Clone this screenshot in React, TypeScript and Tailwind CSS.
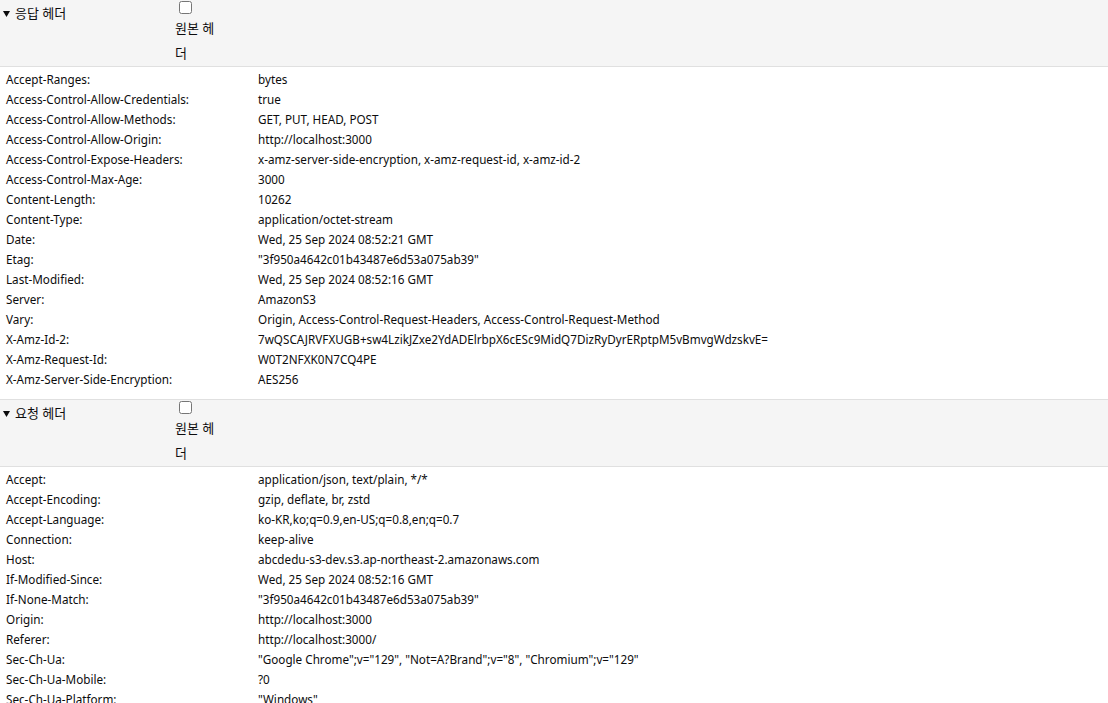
import React from "react";

type Header = [string, string];

const responseHeaders: Header[] = [
  ["Accept-Ranges", "bytes"],
  ["Access-Control-Allow-Credentials", "true"],
  ["Access-Control-Allow-Methods", "GET, PUT, HEAD, POST"],
  ["Access-Control-Allow-Origin", "http://localhost:3000"],
  ["Access-Control-Expose-Headers", "x-amz-server-side-encryption, x-amz-request-id, x-amz-id-2"],
  ["Access-Control-Max-Age", "3000"],
  ["Content-Length", "10262"],
  ["Content-Type", "application/octet-stream"],
  ["Date", "Wed, 25 Sep 2024 08:52:21 GMT"],
  ["Etag", "\"3f950a4642c01b43487e6d53a075ab39\""],
  ["Last-Modified", "Wed, 25 Sep 2024 08:52:16 GMT"],
  ["Server", "AmazonS3"],
  ["Vary", "Origin, Access-Control-Request-Headers, Access-Control-Request-Method"],
  ["X-Amz-Id-2", "7wQSCAJRVFXUGB+sw4LzikJZxe2YdADElrbpX6cESc9MidQ7DizRyDyrERptpM5vBmvgWdzskvE="],
  ["X-Amz-Request-Id", "W0T2NFXK0N7CQ4PE"],
  ["X-Amz-Server-Side-Encryption", "AES256"],
];

const requestHeaders: Header[] = [
  ["Accept", "application/json, text/plain, */*"],
  ["Accept-Encoding", "gzip, deflate, br, zstd"],
  ["Accept-Language", "ko-KR,ko;q=0.9,en-US;q=0.8,en;q=0.7"],
  ["Connection", "keep-alive"],
  ["Host", "abcdedu-s3-dev.s3.ap-northeast-2.amazonaws.com"],
  ["If-Modified-Since", "Wed, 25 Sep 2024 08:52:16 GMT"],
  ["If-None-Match", "\"3f950a4642c01b43487e6d53a075ab39\""],
  ["Origin", "http://localhost:3000"],
  ["Referer", "http://localhost:3000/"],
  ["Sec-Ch-Ua", "\"Google Chrome\";v=\"129\", \"Not=A?Brand\";v=\"8\", \"Chromium\";v=\"129\""],
  ["Sec-Ch-Ua-Mobile", "?0"],
  ["Sec-Ch-Ua-Platform", "\"Windows\""],
];

const SectionHeader = ({ title, top }: { title: string; top?: boolean }) => (
  <div
    className={`flex bg-[#f5f5f5] border-b border-[#e0e0e0] ${top ? "border-t" : ""}`}
  >
    <div className="w-[175px] flex items-center self-start pl-[3px] pt-[4px] h-[22px]">
      <svg width="7" height="6" viewBox="0 0 7 6" className="mr-[5px] mt-[1px]">
        <path d="M0 0 H7 L3.5 6 Z" fill="#0c0c0d" />
      </svg>
      <span className="text-[13px] leading-[18px]">{title}</span>
    </div>
    <label className="flex flex-col w-[44px]">
      <input
        type="checkbox"
        className="ml-[4px] mt-[1px] mb-[2px] w-[13px] h-[13px]"
      />
      <span className="block leading-[25px] text-[13px]">원본 헤더</span>
    </label>
  </div>
);

const HeaderRows = ({ rows }: { rows: Header[] }) => (
  <div className="pt-[3px] pb-[9px]">
    {rows.map(([name, value]) => (
      <div key={name} className="flex h-[20px] items-center text-[11.7px]">
        <div className="w-[258px] pl-[6px] shrink-0">{name}:</div>
        <div className="whitespace-nowrap">{value}</div>
      </div>
    ))}
  </div>
);

const App = () => {
  return (
    <div
      className="w-[1108px] h-[703px] overflow-hidden bg-white text-[#0c0c0d]"
      style={{ fontFamily: '"Noto Sans", "Noto Sans CJK KR", sans-serif' }}
    >
      <SectionHeader title="응답 헤더" />
      <HeaderRows rows={responseHeaders} />
      <SectionHeader title="요청 헤더" top />
      <HeaderRows rows={requestHeaders} />
    </div>
  );
};

export default App;
